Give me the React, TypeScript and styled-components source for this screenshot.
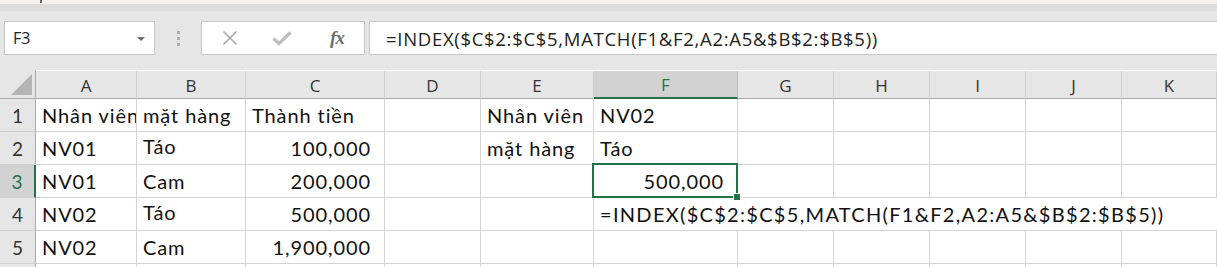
import { Fragment } from 'react'
import styled, { createGlobalStyle } from 'styled-components'

const GlobalStyle = createGlobalStyle`
  html, body { margin: 0; padding: 0; background: #fff; overflow: hidden; }
  body { font-family: "Open Sans", "Liberation Sans", sans-serif; }
`

const CELL_FONT = `"Lato", "Noto Sans", sans-serif`
const UI_FONT = `"Open Sans", "Noto Sans", sans-serif`
const GREEN = '#217346'

const Window = styled.div`
  width: 1217px;
  height: 267px;
  overflow: hidden;
  display: flex;
  flex-direction: column;
  & > * { flex-shrink: 0; }
`

const TitleStrip = styled.div`
  height: 4px;
  background: #f3f2f1;
  position: relative;
`

const TitleTick = styled.span`
  position: absolute;
  left: 40px;
  top: 0;
  width: 2px;
  height: 3px;
  background: #6a6a6a;
`

const Band = styled.div`
  height: 7px;
  background: #dcdcdc;
`

const FormulaRow = styled.div`
  height: 59px;
  background: #e6e6e6;
  display: flex;
  align-items: flex-start;
  padding: 10px 0 0 4px;
  box-sizing: border-box;
`

const Box = styled.div`
  height: 34px;
  box-sizing: border-box;
  background: #fff;
  border: 1px solid #c6c6c6;
  display: flex;
  align-items: center;
`

const NameBox = styled(Box)`
  width: 151px;
  padding: 0 9px 0 8px;
  justify-content: space-between;
  font-family: ${UI_FONT};
  font-size: 16px;
  color: #222;
`

const Caret = styled.span`
  width: 0;
  height: 0;
  border-left: 4px solid transparent;
  border-right: 4px solid transparent;
  border-top: 4px solid #6b6b6b;
  margin-top: 2px;
`

const Grip = styled.div`
  width: 46px;
  height: 34px;
  display: flex;
  flex-direction: column;
  align-items: center;
  justify-content: center;
  gap: 3px;
`

const GripDot = styled.span`
  width: 3px;
  height: 3px;
  background: #acacac;
`

const ActionBox = styled(Box)`
  width: 164px;
  justify-content: space-around;
  padding: 0 4px 0 2px;
  margin-right: 4px;
`

const IconSlot = styled.span`
  width: 30px;
  display: flex;
  justify-content: center;
  align-items: center;
`

const Fx = styled.span`
  font-family: "Liberation Serif", "DejaVu Serif", serif;
  font-style: italic;
  font-weight: bold;
  font-size: 19px;
  color: #6e6e6e;
  letter-spacing: -1px;
  margin-left: 6px;
`

const FormulaBox = styled(Box)`
  flex: 1;
  border-right: none;
  padding-left: 16px;
  font-family: ${UI_FONT};
  font-size: 18.5px;
  letter-spacing: 0.7px;
  color: #222;
  white-space: nowrap;
`

const Sheet = styled.div`
  display: grid;
  grid-template-columns: 36px 101px 109px 139px 96px 113px 144px 96px 96px 96px 96px 1fr;
  grid-template-rows: 29px repeat(6, 33px);
  font-family: ${CELL_FONT};
  font-size: 20px;
  letter-spacing: 0.9px;
  color: #111;
`

const Corner = styled.div`
  background: #e6e6e6;
  border-right: 1px solid #ababab;
  border-bottom: 1px solid #ababab;
  position: relative;
  box-sizing: border-box;
  &::after {
    content: '';
    position: absolute;
    right: 3px;
    bottom: 3px;
    width: 0;
    height: 0;
    border-left: 21px solid transparent;
    border-bottom: 21px solid #b4b4b4;
  }
`

const ColHeader = styled.div<{ $active?: boolean }>`
  background: ${p => (p.$active ? '#d2d2d2' : '#e6e6e6')};
  color: ${p => (p.$active ? GREEN : '#333')};
  border-right: 1px solid ${p => (p.$active ? '#bdbdbd' : '#d0d0d0')};
  border-bottom: ${p => (p.$active ? `2px solid ${GREEN}` : '1px solid #ababab')};
  font-family: ${UI_FONT};
  font-size: 17px;
  letter-spacing: 0;
  display: flex;
  align-items: flex-end;
  justify-content: center;
  padding-bottom: 1px;
  box-sizing: border-box;
  margin-top: 1px;
`

const RowHeader = styled.div<{ $active?: boolean }>`
  background: ${p => (p.$active ? '#d2d2d2' : '#e6e6e6')};
  color: ${p => (p.$active ? GREEN : '#333')};
  border-right: ${p => (p.$active ? `2px solid ${GREEN}` : '1px solid #ababab')};
  border-bottom: 1px solid #d0d0d0;
  font-size: 19px;
  letter-spacing: 0;
  display: flex;
  align-items: flex-end;
  justify-content: center;
  padding-bottom: 4px;
  box-sizing: border-box;
`

const Cell = styled.div<{ $align?: 'left' | 'right'; $span?: number; $raise?: number }>`
  grid-column: span ${p => p.$span ?? 1};
  border-right: ${p => (p.$span ? 'none' : '1px solid #d4d4d4')};
  border-bottom: 1px solid #d4d4d4;
  box-sizing: border-box;
  display: flex;
  align-items: flex-end;
  justify-content: ${p => (p.$align === 'right' ? 'flex-end' : 'flex-start')};
  padding: 0 ${p => (p.$align === 'right' ? '13px' : '0')} ${p => 4 + (p.$raise ?? 0)}px 6px;
  white-space: nowrap;
  overflow: ${p => (p.$span ? 'visible' : 'hidden')};
  letter-spacing: ${p => (p.$span ? '1.3px' : 'inherit')};
  line-height: 1.2;
`

const SelectedCell = styled(Cell)`
  position: relative;
  overflow: visible;
  &::before {
    content: '';
    position: absolute;
    left: -2px;
    top: -2px;
    right: -1px;
    bottom: -1px;
    border: 2px solid ${GREEN};
    pointer-events: none;
  }
`

const FillHandle = styled.span`
  position: absolute;
  right: -4px;
  bottom: -4px;
  width: 6px;
  height: 6px;
  background: ${GREEN};
  border: 1px solid #fff;
  z-index: 2;
`

const columns = ['A', 'B', 'C', 'D', 'E', 'F', 'G', 'H', 'I', 'J', 'K']
const formula = '=INDEX($C$2:$C$5,MATCH(F1&F2,A2:A5&$B$2:$B$5))'

const data: [string, string, string][] = [
  ['Nhân viên', 'mặt hàng', 'Thành tiền'],
  ['NV01', 'Táo', '100,000'],
  ['NV01', 'Cam', '200,000'],
  ['NV02', 'Táo', '500,000'],
  ['NV02', 'Cam', '1,900,000'],
  ['', '', ''],
]

const Empty = ({ n }: { n: number }) => (
  <>
    {Array.from({ length: n }).map((_, i) => (
      <Cell key={i} />
    ))}
  </>
)

const XIcon = () => (
  <svg width="16" height="16" viewBox="0 0 16 16">
    <path d="M1.5 1.5 L14.5 14.5 M14.5 1.5 L1.5 14.5" stroke="#a9a9a9" strokeWidth="1.6" fill="none" />
  </svg>
)

const CheckIcon = () => (
  <svg width="20" height="15" viewBox="0 0 20 15">
    <path d="M1.5 7.5 L7 12.5 L18.5 1.5" stroke="#bdbdbd" strokeWidth="3.2" fill="none" />
  </svg>
)

const App = () => {
  return (
    <>
      <GlobalStyle />
      <Window>
        <TitleStrip>
          <TitleTick />
        </TitleStrip>
        <Band />
        <FormulaRow>
          <NameBox>
            <span>F3</span>
            <Caret />
          </NameBox>
          <Grip>
            <GripDot />
            <GripDot />
            <GripDot />
          </Grip>
          <ActionBox>
            <IconSlot><XIcon /></IconSlot>
            <IconSlot><CheckIcon /></IconSlot>
            <IconSlot><Fx>fx</Fx></IconSlot>
          </ActionBox>
          <FormulaBox>{formula}</FormulaBox>
        </FormulaRow>
        <Sheet>
          <Corner />
          {columns.map(c => (
            <ColHeader key={c} $active={c === 'F'}>{c}</ColHeader>
          ))}

          {data.map((row, r) => {
            const rowNo = r + 1
            return (
              <Fragment key={rowNo}>
                <RowHeader $active={rowNo === 3}>{rowNo}</RowHeader>
                <Cell>{row[0]}</Cell>
                <Cell $raise={rowNo === 2 || rowNo === 4 ? 2 : 0}>{row[1]}</Cell>
                <Cell $align={rowNo === 1 ? 'left' : 'right'}>{row[2]}</Cell>
                <Cell />
                <Cell>{rowNo === 1 ? 'Nhân viên' : rowNo === 2 ? 'mặt hàng' : ''}</Cell>
                {rowNo === 3 ? (
                  <SelectedCell $align="right">
                    500,000
                    <FillHandle />
                  </SelectedCell>
                ) : rowNo === 4 ? (
                  <Cell $span={6}>{formula}</Cell>
                ) : (
                  <Cell>{rowNo === 1 ? 'NV02' : rowNo === 2 ? 'Táo' : ''}</Cell>
                )}
                {rowNo !== 4 && <Empty n={5} />}
              </Fragment>
            )
          })}
        </Sheet>
      </Window>
    </>
  )
}

export default App
